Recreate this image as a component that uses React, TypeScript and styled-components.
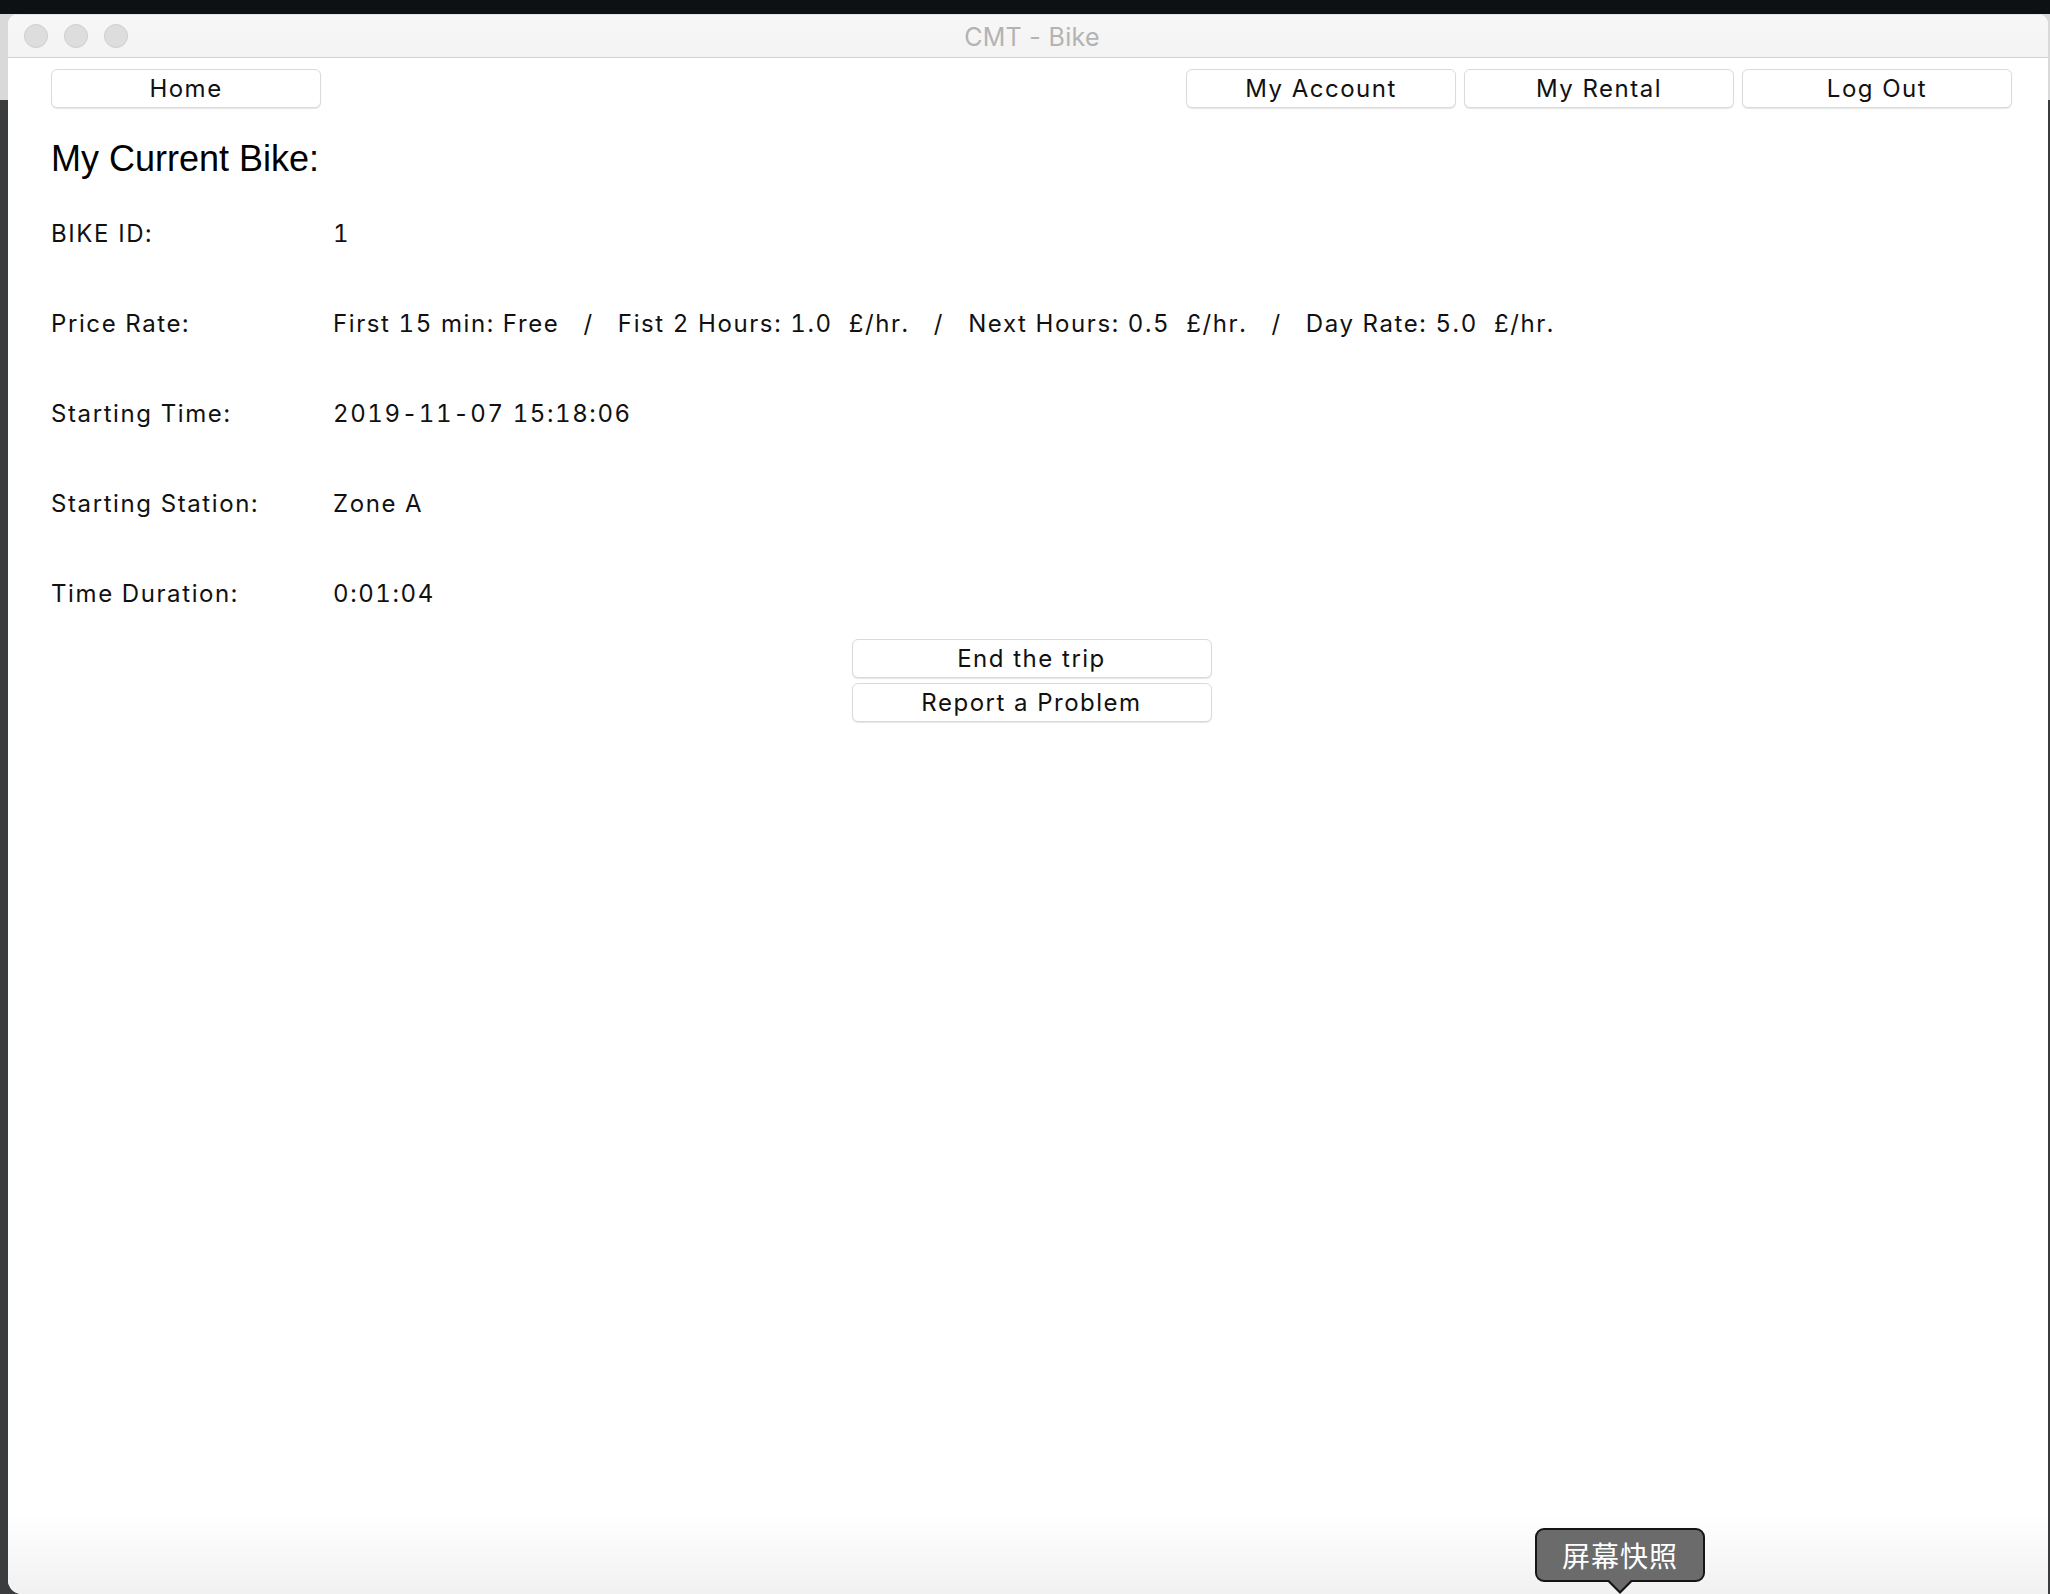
import React from "react";
import styled, { createGlobalStyle } from "styled-components";

const GlobalStyle = createGlobalStyle`
  html, body { margin: 0; padding: 0; }
  body {
    width: 2050px;
    height: 1594px;
    overflow: hidden;
    background: #0e1114;
    font-family: Inter, "Noto Sans", sans-serif;
  }
  * { box-sizing: border-box; }
`;

const Desktop = styled.div`
  display: flex;
  width: 2050px;
  height: 1594px;
  padding: 14px 2px 0 8px;
  background: linear-gradient(to bottom, #0e1114 0, #0e1114 14px, #d9d9d9 14px, #d9d9d9 100px, #3a3c3e 100px);
`;

const Window = styled.div`
  flex: 1;
  display: flex;
  flex-direction: column;
  background: #fff;
  border-radius: 10px 10px 0 14px;
  overflow: hidden;
`;

const TitleBar = styled.div`
  height: 44px;
  display: grid;
  grid-template-columns: 1fr auto 1fr;
  align-items: center;
  padding: 0 16px;
  background: linear-gradient(to bottom, #f7f7f7, #f3f3f3);
  border-top: 1px solid #e4e4e4;
  border-bottom: 1px solid #d3d3d3;
`;

const Lights = styled.div`
  display: flex;
  gap: 16px;
`;

const Light = styled.span`
  width: 24px;
  height: 24px;
  border-radius: 50%;
  background: #dddddd;
  border: 1px solid #cdcdcd;
`;

const Title = styled.div`
  font-family: Inter, "Noto Sans", sans-serif;
  font-size: 25px;
  line-height: 30px;
  padding-top: 2px;
  margin-left: 8px;
  color: #b3b3b3;
  letter-spacing: 0.3px;
`;

const Content = styled.div`
  position: relative;
  flex: 1;
  padding: 11px 36px 0 43px;
  background: linear-gradient(to bottom, #ffffff 0, #ffffff calc(100% - 80px), #f1f1f1 100%);
`;

const Nav = styled.div`
  display: flex;
  justify-content: space-between;
`;

const NavGroup = styled.div`
  display: flex;
  gap: 8px;
`;

const Button = styled.button<{ $w: number }>`
  width: ${(p) => p.$w}px;
  height: 39px;
  padding: 0;
  display: flex;
  align-items: center;
  justify-content: center;
  background: #fff;
  border: 1px solid #dadada;
  border-radius: 6px;
  box-shadow: 0 1px 1px rgba(0, 0, 0, 0.1);
  font-family: Inter, "Noto Sans", sans-serif;
  font-size: 24px;
  color: #111;
  letter-spacing: 1.5px;
`;

const Heading = styled.h1`
  margin: 31px 0 0;
  font-family: "Liberation Sans", Arial, sans-serif;
  font-weight: 400;
  font-size: 36px;
  line-height: 40px;
  color: #000;
`;

const InfoGrid = styled.div`
  display: grid;
  grid-template-columns: 282px 1fr;
  grid-auto-rows: 90px;
  margin-top: 10px;
`;

const Cell = styled.div`
  font-size: 24px;
  line-height: 90px;
  white-space: pre;
  color: #111;
  letter-spacing: 1.6px;
  font-variant-numeric: tabular-nums;
`;

const Actions = styled.div`
  display: flex;
  flex-direction: column;
  align-items: center;
  gap: 5px;
  margin-top: 0;
`;

const Tooltip = styled.div`
  position: absolute;
  left: 1527px;
  top: 1470px;
  width: 170px;
  height: 54px;
  display: flex;
  align-items: center;
  justify-content: center;
  background: #6b6b6b;
  border: 2px solid #151515;
  border-radius: 9px;
  color: #fff;
  font-family: "Noto Sans CJK SC", sans-serif;
  font-size: 28px;
  letter-spacing: 1px;

  &::before {
    content: "";
    position: absolute;
    left: 50%;
    bottom: -14px;
    transform: translateX(-50%);
    border-left: 14px solid transparent;
    border-right: 14px solid transparent;
    border-top: 14px solid #151515;
  }
  &::after {
    content: "";
    position: absolute;
    left: 50%;
    bottom: -11px;
    transform: translateX(-50%);
    border-left: 12px solid transparent;
    border-right: 12px solid transparent;
    border-top: 12px solid #6b6b6b;
  }
`;

const rows: [string, string][] = [
  ["BIKE ID:", "1"],
  [
    "Price Rate:",
    "First 15 min: Free   /   Fist 2 Hours: 1.0  £/hr.   /   Next Hours: 0.5  £/hr.   /   Day Rate: 5.0  £/hr.",
  ],
  ["Starting Time:", "2019-11-07 15:18:06"],
  ["Starting Station:", "Zone A"],
  ["Time Duration:", "0:01:04"],
];

export default function App() {
  return (
    <>
      <GlobalStyle />
      <Desktop>
        <Window>
          <TitleBar>
            <Lights>
              <Light />
              <Light />
              <Light />
            </Lights>
            <Title>CMT - Bike</Title>
            <div />
          </TitleBar>
          <Content>
            <Nav>
              <Button $w={270}>Home</Button>
              <NavGroup>
                <Button $w={270}>My Account</Button>
                <Button $w={270}>My Rental</Button>
                <Button $w={270}>Log Out</Button>
              </NavGroup>
            </Nav>
            <Heading>My Current Bike:</Heading>
            <InfoGrid>
              {rows.map(([label, value]) => (
                <React.Fragment key={label}>
                  <Cell>{label}</Cell>
                  <Cell>{value}</Cell>
                </React.Fragment>
              ))}
            </InfoGrid>
            <Actions>
              <Button $w={360}>End the trip</Button>
              <Button $w={360}>Report a Problem</Button>
            </Actions>
            <Tooltip>屏幕快照</Tooltip>
          </Content>
        </Window>
      </Desktop>
    </>
  );
}
